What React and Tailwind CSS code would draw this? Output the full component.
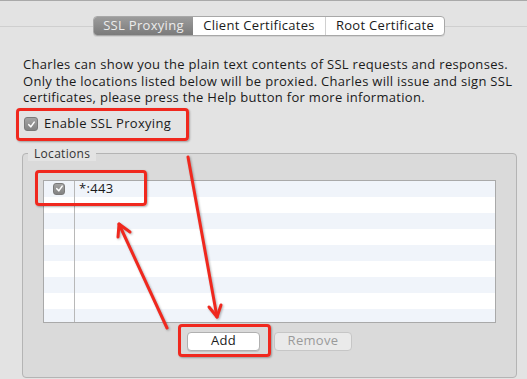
import React from 'react';

const font = { fontFamily: '"Lucida Grande", "Open Sans", "DejaVu Sans", sans-serif' };

const Check = ({ size = 14 }) => (
  <span
    className="inline-flex items-center justify-center rounded-[3px] bg-gradient-to-b from-[#a3a3a3] to-[#838383] border border-[#7a7a7a] shrink-0"
    style={{ width: size, height: size }}
  >
    <svg width="9" height="9" viewBox="0 0 10 10">
      <path d="M2 5.2 L4.2 7.6 L8 2.4" fill="none" stroke="#fff" strokeWidth="1.7" strokeLinecap="round" strokeLinejoin="round" />
    </svg>
  </span>
);

const rows = Array.from({ length: 9 });

const App = () => {
  return (
    <div className="relative w-[527px] h-[379px] overflow-hidden bg-[#e3e3e3] border-t border-[#a9a9a9] text-[13px] tracking-[0.3px] text-[#1a1a1a]" style={font}>
      {/* tab bar */}
      <div className="flex items-center pt-[15px]">
        <div className="w-[93px] h-px bg-[#cfcfcf]" />
        <div className="flex h-[20px] rounded-[4px] border border-[#a8a8a8] bg-white overflow-hidden shadow-[0_1px_0_rgba(0,0,0,0.08)]">
          <div className="w-[99px] flex items-center justify-center bg-gradient-to-b from-[#9c9c9c] to-[#7b7b7b] text-[#ececec]">SSL Proxying</div>
          <div className="w-[133px] flex items-center justify-center border-r border-[#d0d0d0]">Client Certificates</div>
          <div className="w-[118px] flex items-center justify-center">Root Certificate</div>
        </div>
        <div className="flex-1 h-px bg-[#cfcfcf]" />
      </div>

      {/* description */}
      <div className="pl-[23px] pt-[20px] leading-[16.5px] whitespace-nowrap">
        <div>Charles can show you the plain text contents of SSL requests and responses.</div>
        <div>Only the locations listed below will be proxied. Charles will issue and sign SSL</div>
        <div>certificates, please press the Help button for more information.</div>
      </div>

      <div className="flex items-center gap-[6px] pl-[24px] mt-[10px] h-[17px]">
        <Check />
        <span>Enable SSL Proxying</span>
      </div>

      {/* Locations group */}
      <div className="relative ml-[22px] w-[495px] h-[225px] mt-[20px] rounded-[4px] border border-[#b4b4b4] bg-[#dadada] px-[20px] pt-[26px]">
        <div className="absolute left-[5px] -top-[8px] px-[6px] bg-[#e3e3e3] text-[12px] leading-[15px] text-[#333]">Locations</div>
        <div className="relative h-[143px] border border-[#a9a9a9] bg-white overflow-hidden">
          {rows.map((_, i) => (
            <div key={i} className={`flex h-[16px] ${i % 2 === 0 ? 'bg-[#f0f4fa]' : 'bg-white'}`}>
              <div className="w-[31px] h-full border-r border-[#b8b8b8] flex items-center justify-center">
                {i === 0 && <Check size={12} />}
              </div>
              <div className="pl-[4px] flex items-center text-[13px]">{i === 0 ? '*:443' : ''}</div>
            </div>
          ))}
        </div>
        <div className="flex gap-[14px] mt-[9px] ml-[144px]">
          <div className="w-[73px] h-[19px] rounded-[4px] border border-[#b0b0b0] bg-white flex items-center justify-center shadow-[0_1px_0_rgba(0,0,0,0.1)]">Add</div>
          <div className="w-[78px] h-[19px] rounded-[4px] border border-[#c6c6c6] bg-[#eaeaea] flex items-center justify-center text-[#9a9a9a]">Remove</div>
        </div>
      </div>

      {/* annotations */}
      <div className="absolute left-[16px] top-[107px] w-[173px] h-[33px] rounded-[4px] border-[3px] border-[#f0281e] shadow-[1px_1px_2px_rgba(0,0,0,0.3)]" />
      <div className="absolute left-[35px] top-[169px] w-[112px] h-[36px] rounded-[4px] border-[3px] border-[#f0281e] shadow-[1px_1px_2px_rgba(0,0,0,0.3)]" />
      <div className="absolute left-[178px] top-[323px] w-[93px] h-[33px] rounded-[4px] border-[3px] border-[#f0281e] shadow-[1px_1px_2px_rgba(0,0,0,0.3)]" />
      <svg className="absolute inset-0 pointer-events-none" width="527" height="379" style={{ filter: 'drop-shadow(1px 1px 1px rgba(0,0,0,0.3))' }}>
        <g fill="none" stroke="#f0281e" strokeWidth="3" strokeLinecap="round" strokeLinejoin="round">
          <line x1="188" y1="156" x2="217" y2="316" />
          <polyline points="209,306 217,316 221,304" />
          <line x1="167" y1="327" x2="119" y2="223" />
          <polyline points="118,236 119,223 130,231" />
        </g>
      </svg>
    </div>
  );
};

export default App;
